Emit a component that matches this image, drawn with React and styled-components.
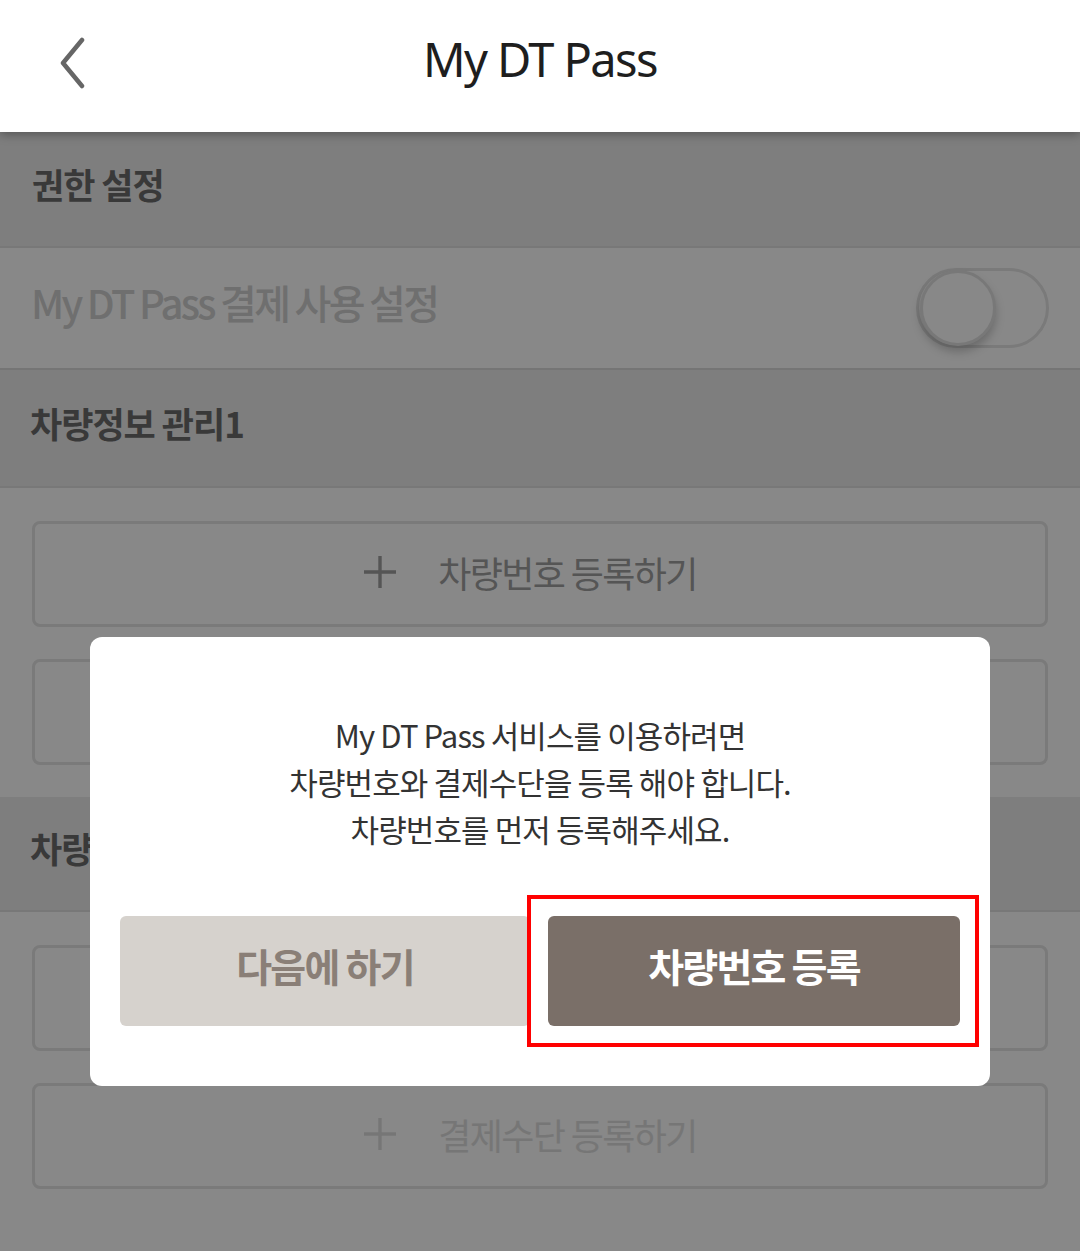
import React from 'react';
import styled, {createGlobalStyle} from 'styled-components';

const GlobalStyle = createGlobalStyle`
  html, body {
    margin: 0;
    padding: 0;
    background: #ffffff;
  }
  body {
    font-family: "Noto Sans CJK KR", "Noto Sans", sans-serif;
  }
  * {
    box-sizing: border-box;
  }
`;

const Page = styled.div`
  width: 1080px;
  min-height: 100vh;
  display: flex;
  flex-direction: column;
  background: #ffffff;
`;

const Header = styled.header`
  position: relative;
  z-index: 3;
  height: 132px;
  flex-shrink: 0;
  display: flex;
  align-items: center;
  justify-content: center;
  background: #ffffff;
  box-shadow: 0 2px 10px rgba(0, 0, 0, 0.35);
`;

const BackButton = styled.button`
  position: absolute;
  left: 50px;
  top: 34px;
  width: 44px;
  height: 58px;
  padding: 0;
  border: none;
  background: none;
  display: flex;
  align-items: center;
  justify-content: center;
`;

const Title = styled.h1`
  margin: 0;
  font-family: "Noto Sans", "Noto Sans CJK KR", sans-serif;
  font-size: 47px;
  font-weight: 400;
  letter-spacing: -1.6px;
  color: #1e1e1e;
  transform: translateY(-7px);
`;

const Content = styled.main`
  position: relative;
  flex: 1;
  display: flex;
  flex-direction: column;
`;

const SectionHeader = styled.div`
  height: ${p => p.$height}px;
  display: flex;
  align-items: center;
  padding: 0 ${p => p.$pad}px 12px;
  background: #ececec;
  border-bottom: 2px solid #e2e2e2;
  font-size: 35px;
  font-weight: 700;
  letter-spacing: -1px;
  color: #6c6c6c;
`;

const SettingRow = styled.div`
  height: 122px;
  display: flex;
  align-items: center;
  justify-content: space-between;
  padding: 0 31px 0 31px;
  background: #ffffff;
  border-bottom: 2px solid #dcdcdc;
`;

const SettingLabel = styled.span`
  font-size: 40px;
  font-weight: 500;
  letter-spacing: -2.7px;
  color: #d0d0d0;
  transform: translateY(-6px);
`;

const Toggle = styled.div`
  position: relative;
  width: 133px;
  height: 80px;
  border: 3px solid #e4e4e4;
  border-radius: 40px;
  background: #ffffff;
`;

const Knob = styled.div`
  position: absolute;
  left: 1px;
  top: -1px;
  width: 76px;
  height: 76px;
  border-radius: 50%;
  border: 3px solid #e2e2e2;
  background: #ffffff;
  box-shadow: 0 6px 10px rgba(0, 0, 0, 0.22);
`;

const ButtonList = styled.div`
  display: flex;
  flex-direction: column;
  gap: 32px;
  padding: 33px 32px 32px;
  background: #ffffff;
`;

const AddButton = styled.button`
  height: 106px;
  display: flex;
  align-items: center;
  justify-content: center;
  gap: 41px;
  border: 3px solid #e4e4e4;
  border-radius: 8px;
  background: #ffffff;
  font-family: "Noto Sans CJK KR", sans-serif;
  font-size: 36px;
  font-weight: 400;
  letter-spacing: -1.6px;
  color: ${p => (p.$muted ? '#dedede' : '#a0a0a0')};
  padding: 0 0 4px 0;
  svg {
    margin-left: -20px;
  }
`;

const Filler = styled.div`
  flex: 1;
  background: #ffffff;
`;

const Dim = styled.div`
  position: absolute;
  inset: 0;
  z-index: 2;
  background: rgba(0, 0, 0, 0.467);
  display: flex;
  justify-content: center;
  align-items: flex-start;
  padding-top: 505px;
`;

const Modal = styled.div`
  width: 900px;
  background: #ffffff;
  border-radius: 12px;
  padding: 74px 30px 60px;
  display: flex;
  flex-direction: column;
  align-items: center;
`;

const Message = styled.p`
  margin: 0;
  text-align: center;
  font-size: 31px;
  font-weight: 400;
  line-height: 47px;
  letter-spacing: -0.9px;
  color: #333333;
`;

const ModalActions = styled.div`
  margin-top: 64px;
  width: 100%;
  display: flex;
  gap: 18px;
`;

const ModalButton = styled.button`
  position: relative;
  flex: ${p => (p.$primary ? '0 0 412px' : '0 0 410px')};
  height: 110px;
  border: none;
  border-radius: 6px;
  background: ${p => (p.$primary ? '#7a6f68' : '#d6d2cd')};
  color: ${p => (p.$primary ? '#ffffff' : '#8a7f77')};
  font-family: "Noto Sans CJK KR", sans-serif;
  font-size: 39px;
  font-weight: 700;
  letter-spacing: -1.8px;
  padding: 0 0 12px 0;
`;

const Highlight = styled.span`
  position: absolute;
  top: -21px;
  bottom: -21px;
  left: -21px;
  right: -19px;
  border: 4px solid #ff0000;
  pointer-events: none;
`;

const Chevron = () => (
  <svg width="30" height="52" viewBox="0 0 30 52" fill="none">
    <path d="M25 3 L6 26 L25 49" stroke="#666666" strokeWidth="4.5" strokeLinecap="round" strokeLinejoin="round"/>
  </svg>
);

const Plus = () => (
  <svg width="34" height="34" viewBox="0 0 34 34" fill="none">
    <path d="M17 1 V33 M1 17 H33" stroke="currentColor" strokeWidth="3.4"/>
  </svg>
);

export default function App() {
  return (
    <Page>
      <GlobalStyle/>
      <Header>
        <BackButton aria-label="back"><Chevron/></BackButton>
        <Title>My DT Pass</Title>
      </Header>
      <Content>
        <SectionHeader $height={116} $pad={32}>권한 설정</SectionHeader>
        <SettingRow>
          <SettingLabel>My DT Pass 결제 사용 설정</SettingLabel>
          <Toggle><Knob/></Toggle>
        </SettingRow>
        <SectionHeader $height={118} $pad={30}>차량정보 관리1</SectionHeader>
        <ButtonList>
          <AddButton><Plus/>차량번호 등록하기</AddButton>
          <AddButton $muted><Plus/>결제수단 등록하기</AddButton>
        </ButtonList>
        <SectionHeader $height={115} $pad={30}>차량정보 관리2</SectionHeader>
        <ButtonList>
          <AddButton><Plus/>차량번호 등록하기</AddButton>
          <AddButton $muted><Plus/>결제수단 등록하기</AddButton>
        </ButtonList>
        <Filler/>
        <Dim>
          <Modal>
            <Message>
              My DT Pass 서비스를 이용하려면<br/>
              차량번호와 결제수단을 등록 해야 합니다.<br/>
              차량번호를 먼저 등록해주세요.
            </Message>
            <ModalActions>
              <ModalButton>다음에 하기</ModalButton>
              <ModalButton $primary>
                차량번호 등록
                <Highlight/>
              </ModalButton>
            </ModalActions>
          </Modal>
        </Dim>
      </Content>
    </Page>
  );
}
